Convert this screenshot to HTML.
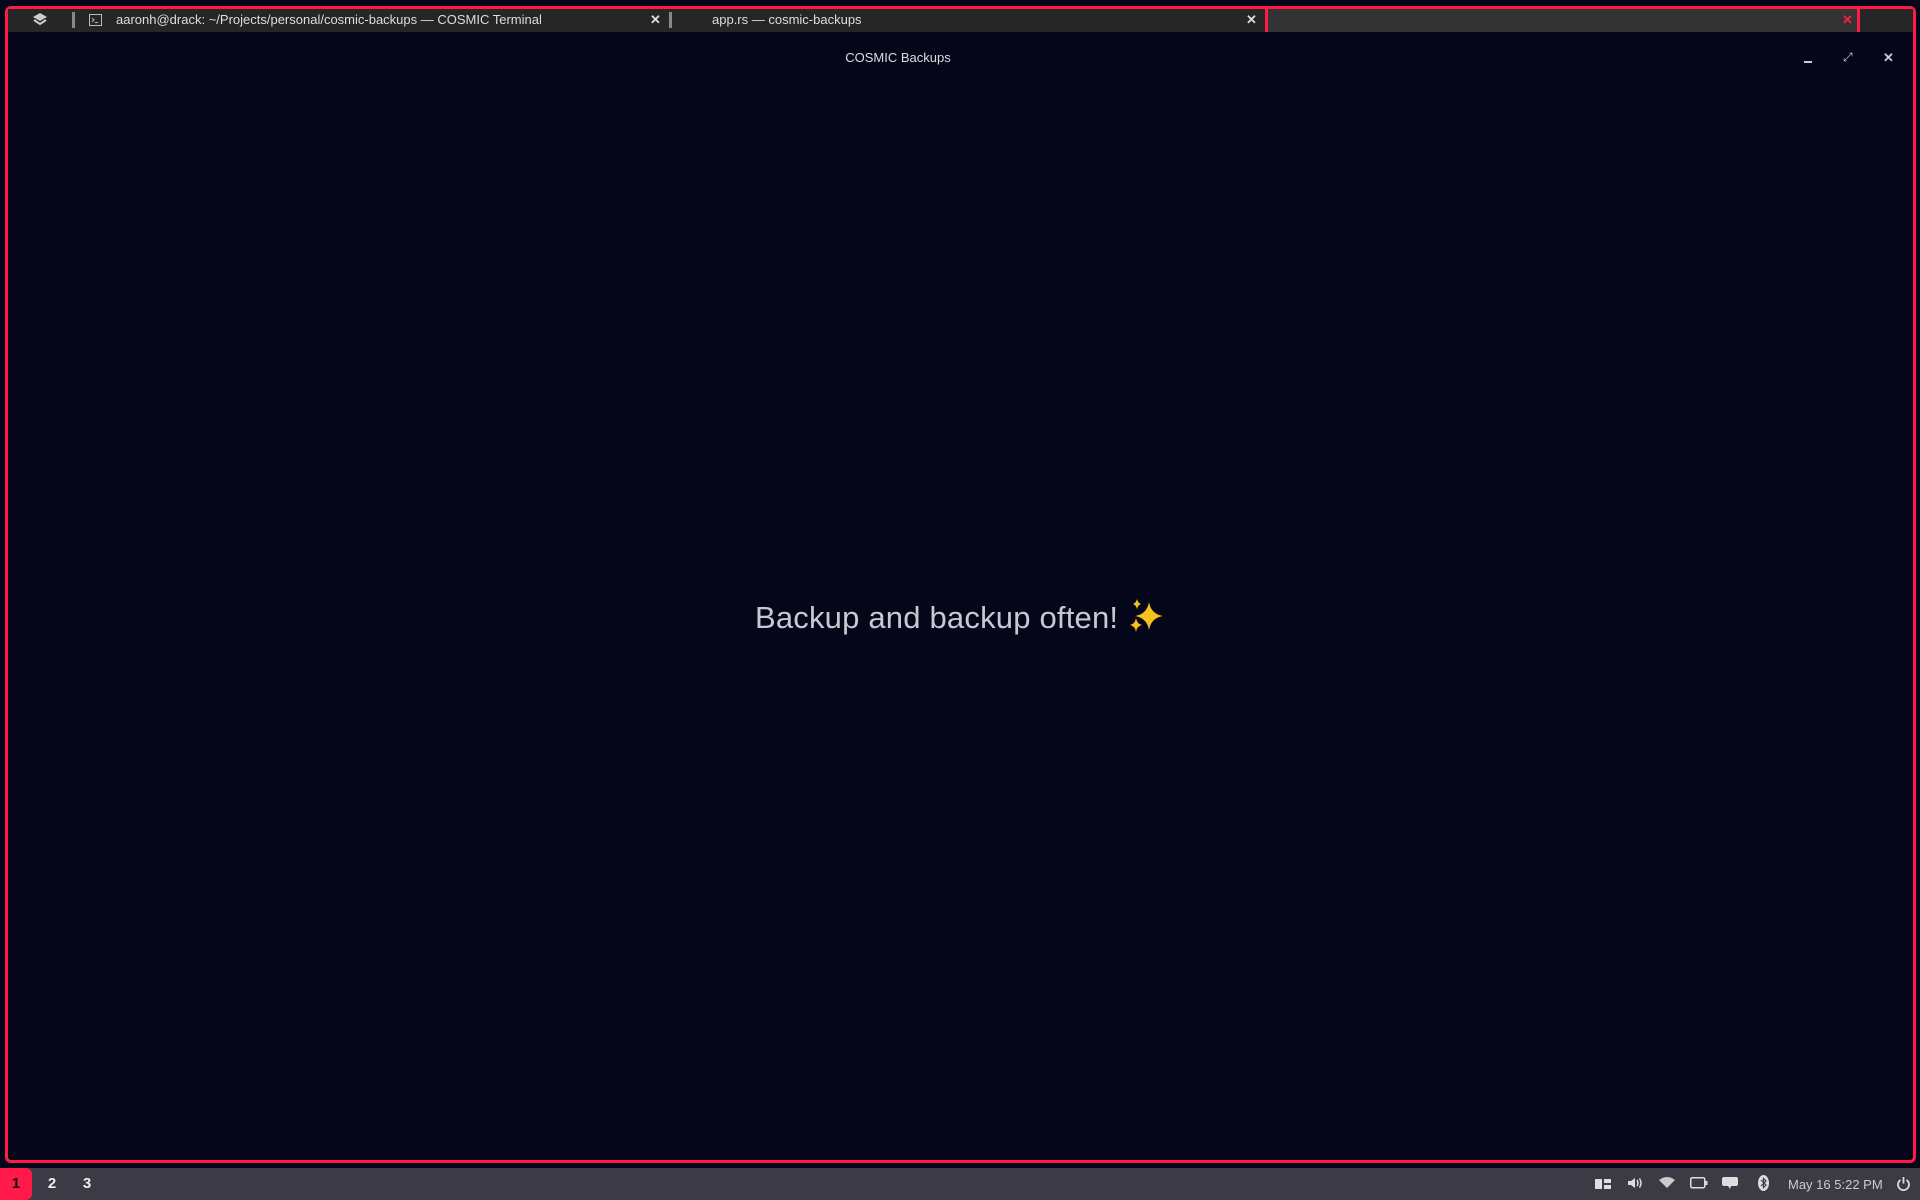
<!DOCTYPE html>
<html><head><meta charset="utf-8"><style>
*{margin:0;padding:0;box-sizing:border-box}
body{width:1920px;height:1200px;background:#06061a;position:relative;overflow:hidden;font-family:"Liberation Sans",sans-serif;color:#ddd}
.frame{position:absolute;left:5px;top:6px;width:1911px;height:1157px;border:3px solid #ff1a4a;border-radius:6px}
.tabbar{position:absolute;left:8px;top:9px;width:1905px;height:23px;background:#262626}
.tab3{position:absolute;left:1265px;top:9px;width:595px;height:23px;background:#333;border-left:3px solid #ff1a4a;border-right:3px solid #ff1a4a}
.t{position:absolute;font-size:13px;top:12px;color:#ddd}
.sep{position:absolute;top:12px;width:3px;height:16px;background:#888}
.title{position:absolute;top:50px;left:0;width:1796px;text-align:center;font-size:13px;color:#ddd}
.main{position:absolute;top:598px;left:0;width:1920px;text-align:center;font-size:31px;color:#c8c8d0;letter-spacing:0.2px}
.panel{position:absolute;left:0;top:1168px;width:1920px;height:32px;background:#3b3a45}
.ws{position:absolute;top:1168px;height:32px;font-size:15px;font-weight:bold;color:#eee;line-height:32px;text-align:center;width:32px}
.pt{position:absolute;top:1177px;font-size:13px;color:#ccc}
</style></head><body>
<div class="frame"></div>
<div class="tabbar"></div>
<div class="tab3"></div>
<svg style="position:absolute;left:32px;top:12px" width="16" height="16" viewBox="0 0 16 16"><path d="M8 1 L15 5 L8 9 L1 5Z" fill="#ccc"/><path d="M2 8 L8 12 L14 8" stroke="#ccc" stroke-width="2" fill="none"/></svg>
<div class="sep" style="left:72px"></div>
<svg style="position:absolute;left:89px;top:14px" width="13" height="12" viewBox="0 0 13 12"><rect x="0.5" y="0.5" width="12" height="11" fill="none" stroke="#bbb"/><path d="M3 4 L5 6 L3 8 M6 8.5 H9" stroke="#bbb" fill="none"/></svg>
<div class="t" style="left:116px">aaronh@drack: ~/Projects/personal/cosmic-backups — COSMIC Terminal</div>
<div class="t" style="left:650px;font-weight:bold">✕</div>
<div class="sep" style="left:669px"></div>
<div class="t" style="left:712px">app.rs — cosmic-backups</div>
<div class="t" style="left:1246px;font-weight:bold">✕</div>
<div class="t" style="left:1842px;font-weight:bold;color:#ff1a4a">✕</div>
<div class="title">COSMIC Backups</div>
<div style="position:absolute;left:1804px;top:61px;width:8px;height:2px;background:#ccc"></div>
<div class="t" style="left:1843px;top:50px;font-size:12px;color:#ccc">⤢</div>
<div class="t" style="left:1883px;top:50px;font-weight:bold;color:#ccc">✕</div>
<div class="main">Backup and backup often! <svg width="38" height="36" viewBox="0 0 38 36" style="vertical-align:-6px"><path d="M22 4 Q24 16 36 18 Q24 20 22 32 Q20 20 8 18 Q20 16 22 4Z" fill="#f7c21b"/><path d="M9 20 Q10 26 15 27 Q10 28 9 34 Q8 28 3 27 Q8 26 9 20Z" fill="#f7c21b"/><path d="M10 1 Q11 5 14 6 Q11 7 10 11 Q9 7 6 6 Q9 5 10 1Z" fill="#f7c21b"/></svg></div>
<div class="panel"></div>
<div class="ws" style="left:0;background:#ff1a4a;color:#111;border-radius:0 6px 6px 0">1</div>
<div class="ws" style="left:36px">2</div>
<div class="ws" style="left:71px">3</div>
<svg style="position:absolute;left:1595px;top:1178px" width="16" height="12"><rect x="0" y="1" width="7" height="10" fill="#ddd"/><rect x="9" y="1" width="7" height="4" fill="#ddd"/><rect x="9" y="7" width="7" height="4" fill="#ddd"/></svg>
<svg style="position:absolute;left:1627px;top:1176px" width="16" height="14"><path d="M1 5 H4 L8 2 V12 L4 9 H1Z" fill="#ddd"/><path d="M10 4 Q12 7 10 10 M12.5 2.5 Q15.5 7 12.5 11.5" stroke="#ddd" stroke-width="1.5" fill="none"/></svg>
<svg style="position:absolute;left:1659px;top:1176px" width="16" height="12"><path d="M0 4 Q8 -2 16 4 L8 12Z" fill="#ccc"/></svg>
<svg style="position:absolute;left:1690px;top:1177px" width="18" height="12"><rect x="0.75" y="0.75" width="14" height="10" rx="1.5" fill="none" stroke="#ddd" stroke-width="1.5"/><rect x="15.5" y="4" width="2" height="4" fill="#ddd"/></svg>
<svg style="position:absolute;left:1722px;top:1177px" width="16" height="13"><rect x="0" y="0" width="16" height="9" rx="2" fill="#ddd"/><path d="M6 9 L9 9 L8 12Z" fill="#ddd"/></svg>
<svg style="position:absolute;left:1758px;top:1175px" width="11" height="16"><ellipse cx="5.5" cy="8" rx="5.5" ry="8" fill="#ddd"/><path d="M3 5 L8 10 L5.5 12.5 V3.5 L8 6 L3 11" stroke="#3b3a45" stroke-width="1.2" fill="none"/></svg>
<div class="pt" style="left:1788px">May 16 5:22 PM</div>
<svg style="position:absolute;left:1896px;top:1176px" width="15" height="15"><path d="M4.5 4 A5.5 5.5 0 1 0 10.5 4" stroke="#ddd" stroke-width="1.8" fill="none"/><path d="M7.5 1 V7.5" stroke="#ddd" stroke-width="1.8"/></svg>
</body></html>
